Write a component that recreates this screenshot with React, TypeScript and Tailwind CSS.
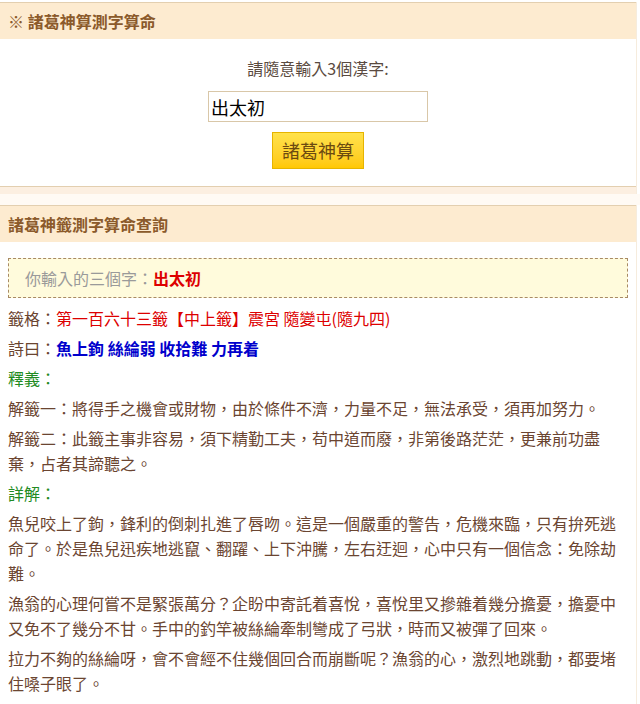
import React from "react";

const font = { fontFamily: '"Noto Sans CJK TC", "Noto Sans CJK SC", sans-serif' };

function Header({ children }: { children: React.ReactNode }) {
  return (
    <div className="h-[37px] flex items-center px-2 bg-[#fdebd0] border-t border-[#e3cfb0] text-[16px] font-bold text-[#8b5a2b]">
      {children}
    </div>
  );
}

export default function App() {
  return (
    <div className="w-[640px] bg-white pt-[2px] text-[16px] text-[#6b4531]" style={font}>
      {/* 測字輸入 */}
      <div className="w-[637px] border-r border-[#f6ecdd]">
        <Header>※ 諸葛神算測字算命</Header>
        <div className="flex flex-col items-center pt-[17px] pb-[17px] border-b border-[#e3cfb0]">
          <p className="leading-[25px] text-[#5a4a40]">請隨意輸入3個漢字:</p>
          <input
            defaultValue="出太初"
            className="mt-[10px] w-[220px] h-[31px] border border-[#d9c7a8] px-[2px] text-[18px] text-black outline-none"
          />
          <button className="mt-[10px] w-[92px] h-[37px] border border-[#e6b400] bg-gradient-to-b from-[#ffe24a] to-[#ffc800] text-[18px] text-[#6b4a10]">
            諸葛神算
          </button>
        </div>
        <div className="h-[7px] bg-[#fcefe1]" />
      </div>

      <div className="h-[11px] bg-[#fffaf4]" />

      {/* 查詢結果 */}
      <div className="w-[637px] border-r border-[#f6ecdd]">
        <Header>諸葛神籤測字算命查詢</Header>
        <div className="px-2 pt-4 pb-6">
          <div className="h-[40px] flex items-center px-4 bg-[#fffbdc] border border-dashed border-[#a88a64]">
            <span className="text-[#9a9a9a]">你輸入的三個字：</span>
            <span className="font-bold text-[#dd0000]">出太初</span>
          </div>

          <div className="mt-[8px] flex flex-col gap-[5px] leading-[25px]">
            <p>
              籤格：<span className="text-[#dd0000]">第一百六十三籤【中上籤】震宮 隨變屯(隨九四)</span>
            </p>
            <p>
              詩曰：<span className="font-bold text-[#0000cc]">魚上鉤 絲綸弱 收拾難 力再着</span>
            </p>
            <p className="text-[#228b22]">釋義：</p>
            <p>解籤一：將得手之機會或財物，由於條件不濟，力量不足，無法承受，須再加努力。</p>
            <p>解籤二：此籤主事非容易，須下精勤工夫，苟中道而廢，非第後路茫茫，更兼前功盡棄，占者其諦聽之。</p>
            <p className="text-[#228b22]">詳解：</p>
            <p>魚兒咬上了鉤，鋒利的倒刺扎進了唇吻。這是一個嚴重的警告，危機來臨，只有拚死逃命了。於是魚兒迅疾地逃竄、翻躍、上下沖騰，左右迂迴，心中只有一個信念：免除劫難。</p>
            <p>漁翁的心理何嘗不是緊張萬分？企盼中寄託着喜悅，喜悅里又摻雜着幾分擔憂，擔憂中又免不了幾分不甘。手中的釣竿被絲綸牽制彎成了弓狀，時而又被彈了回來。</p>
            <p>拉力不夠的絲綸呀，會不會經不住幾個回合而崩斷呢？漁翁的心，激烈地跳動，都要堵住嗓子眼了。</p>
            <p>不是魚逃，就是絲斷，這是殊死的搏鬥，對於漁翁，對於上了鉤的魚兒，都沒有退路了。</p>
          </div>
        </div>
      </div>
    </div>
  );
}
